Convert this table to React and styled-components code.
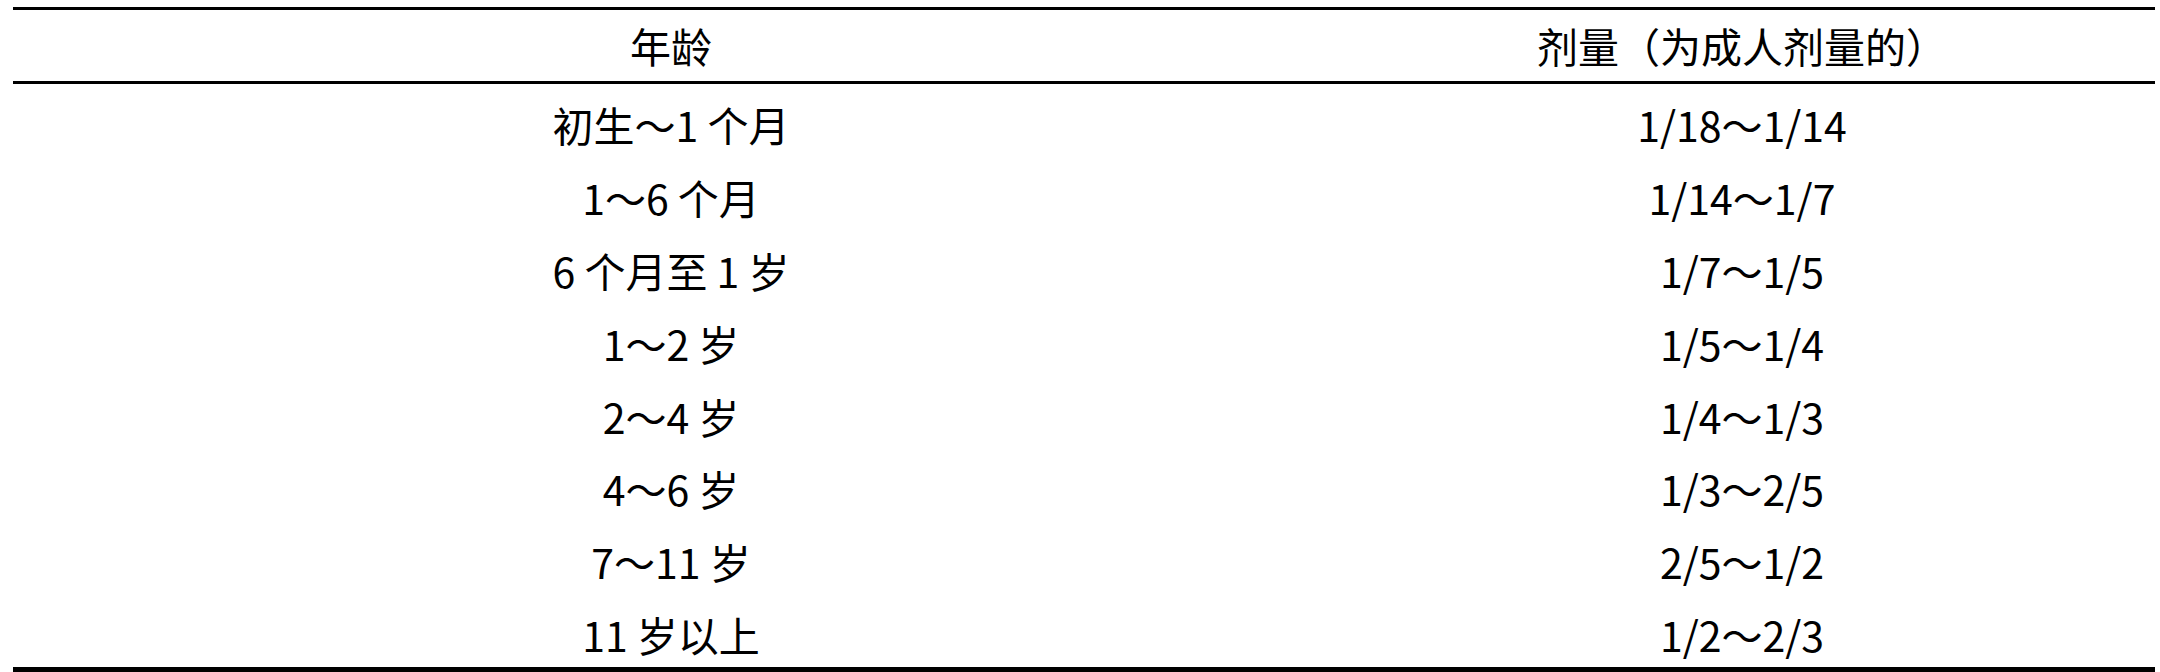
import React from 'react';
import styled, { createGlobalStyle } from 'styled-components';

// Page setup
const GlobalStyle = createGlobalStyle`
  html, body {
    margin: 0;
    padding: 0;
    background: #ffffff;
  }
`;

const colors = {
  ink: '#000000',
  paper: '#FFFFFF',
};

const fonts = {
  body: `'Noto Sans CJK SC', 'Noto Sans', sans-serif`,
};

const rows = [
  ['初生～1 个月', '1/18～1/14'],
  ['1～6 个月', '1/14～1/7'],
  ['6 个月至 1 岁', '1/7～1/5'],
  ['1～2 岁', '1/5～1/4'],
  ['2～4 岁', '1/4～1/3'],
  ['4～6 岁', '1/3～2/5'],
  ['7～11 岁', '2/5～1/2'],
  ['11 岁以上', '1/2～2/3'],
];

const Page = styled.div`
  width: 2160px;
  height: 672px;
  padding-top: 7px;
  box-sizing: border-box;
  background: ${colors.paper};
  font-family: ${fonts.body};
  color: ${colors.ink};
`;

const Table = styled.div`
  margin-left: 13px;
  width: 2142px;
  border-top: 3px solid ${colors.ink};
  border-bottom: 5px solid ${colors.ink};
`;

const Row = styled.div`
  display: grid;
  grid-template-columns: 1316px 1fr;
  height: ${(p) => (p.$head ? '74px' : '72.9px')};
  box-sizing: border-box;
  padding-top: ${(p) => (p.$head ? '0' : '8px')};
  border-bottom: ${(p) => (p.$head ? `3px solid ${colors.ink}` : 'none')};
`;

const Cell = styled.div`
  display: flex;
  align-items: center;
  justify-content: center;
  font-size: 41px;
  line-height: 1;
  white-space: pre;
`;

export default function App() {
  return (
    <>
      <GlobalStyle />
      <Page>
        <Table>
          <Row $head>
            <Cell>年龄</Cell>
            <Cell>剂量（为成人剂量的）</Cell>
          </Row>
          {rows.map(([age, dose]) => (
            <Row key={age}>
              <Cell>{age}</Cell>
              <Cell>{dose}</Cell>
            </Row>
          ))}
        </Table>
      </Page>
    </>
  );
}
